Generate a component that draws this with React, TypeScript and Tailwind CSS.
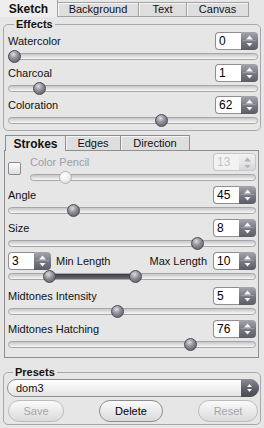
import React from 'react';

// thumb styles for the round slider handles
const thumbDark =
  'border border-[#4a4a52] bg-[radial-gradient(circle_at_40%_30%,#dcdce2_0%,#8c8c94_45%,#55555e_100%)]';
const thumbLight =
  'border border-[#b4b4b8] bg-[radial-gradient(circle_at_40%_30%,#ffffff_0%,#f0f0f0_50%,#d2d2d4_100%)]';

function Arrows({ disabled, small }: { disabled?: boolean; small?: boolean }) {
  const fill = disabled ? '#b4b4b8' : '#f4f4f6';
  if (small) {
    return (
      <svg width="17" height="18" viewBox="0 0 17 18">
        <path d="M6 8 L8.5 5 L11 8 Z" fill={fill} />
        <path d="M6 10 L8.5 13 L11 10 Z" fill={fill} />
      </svg>
    );
  }
  return (
    <svg width="17" height="18" viewBox="0 0 17 18">
      <path d="M5 7.5 L8.5 3.5 L12 7.5 Z" fill={fill} />
      <path d="M2 8.5 H15" stroke={disabled ? '#e8e8ea' : '#9a9aa2'} strokeWidth="1" />
      <path d="M5.5 11 L8.5 14.5 L11.5 11 Z" fill={fill} />
    </svg>
  );
}

function Spin({ value, disabled }: { value: string; disabled?: boolean }) {
  return (
    <div className="flex h-[18px] w-[43px] shrink-0">
      <div
        className={`flex flex-1 items-center rounded-l-[4px] border border-r-0 pl-[3px] text-[12px] ${
          disabled ? 'border-[#c6c6c8] bg-[#f2f2f2] text-[#c4c4c8]' : 'border-[#8e8e92] bg-white text-black'
        }`}
      >
        {value}
      </div>
      <div
        className={`w-[17px] rounded-r-[4px] ${
          disabled
            ? 'border border-l-0 border-[#c6c6c8] bg-gradient-to-b from-[#f2f2f2] to-[#d8d8da]'
            : 'bg-gradient-to-b from-[#a6a6ae] via-[#7a7a84] to-[#5c5c66]'
        }`}
      >
        <Arrows disabled={disabled} />
      </div>
    </div>
  );
}

function Slider({ pos, to, disabled }: { pos: number; to?: number; disabled?: boolean }) {
  const left = (p: number) => `calc(${p * 100}% - ${p * 13}px)`;
  return (
    <div className="relative h-[13px]">
      <div className="absolute inset-x-0 top-[3px] h-[7px] rounded-full border border-[#a6a6a8] bg-gradient-to-b from-[#c6c6c8] to-[#f8f8f8]" />
      {to !== undefined && (
        <div
          className="absolute top-[4px] h-[5px] bg-gradient-to-b from-[#3e3e46] to-[#6c6c74]"
          style={{
            left: `calc(${pos * 100}% - ${pos * 13}px + 6px)`,
            right: `calc(${(1 - to) * 100}% - ${(1 - to) * 13}px + 6px)`,
          }}
        />
      )}
      <div
        className={`absolute top-0 size-[13px] rounded-full ${disabled ? thumbLight : thumbDark}`}
        style={{ left: left(pos) }}
      />
      {to !== undefined && (
        <div className={`absolute top-0 size-[13px] rounded-full ${thumbDark}`} style={{ left: left(to) }} />
      )}
    </div>
  );
}

function Item({
  label,
  value,
  pos,
  gap = 'h-[15px]',
}: {
  label: string;
  value: string;
  pos: number;
  gap?: string;
}) {
  return (
    <div>
      <div className="flex h-[18px] items-center justify-between">
        <span>{label}</span>
        <Spin value={value} />
      </div>
      <div className={gap}>
        <Slider pos={pos} />
      </div>
    </div>
  );
}

function Button({ label, disabled, w }: { label: string; disabled?: boolean; w: string }) {
  return (
    <button
      className={`${w} h-[22px] rounded-full border bg-gradient-to-b from-[#fbfbfb] to-[#dadadc] text-[11px] ${
        disabled ? 'border-[#bdbdc0] text-[#a6a6aa]' : 'border-[#8e8e92] text-black'
      }`}
    >
      {label}
    </button>
  );
}

export default function App() {
  return (
    <div className="h-[428px] w-[264px] overflow-hidden bg-[#e6e6e6] font-['Liberation_Sans',Arial,sans-serif] text-[11px] text-[#111]">
      {/* top tabs */}
      <div className="flex h-[17px] items-end">
        <div className="flex h-[17px] w-[58px] items-center justify-center border-r border-[#a2a2a4] bg-[#eeeeee] text-[12px] font-bold">
          Sketch
        </div>
        <div className="flex h-[15px] w-[81px] items-center justify-center border-r border-t border-b border-[#a2a2a4] bg-[#dedede] shadow-[inset_1px_1px_0_#f6f6f6]">
          Background
        </div>
        <div className="flex h-[15px] w-[48px] items-center justify-center border-r border-t border-b border-[#a2a2a4] bg-[#dedede] shadow-[inset_1px_1px_0_#f6f6f6]">
          Text
        </div>
        <div className="flex h-[15px] w-[62px] items-center justify-center border-r border-t border-b border-[#a2a2a4] bg-[#dedede] shadow-[inset_1px_1px_0_#f6f6f6]">
          Canvas
        </div>
      </div>

      {/* effects group */}
      <fieldset className="ml-[3px] mr-[3px] mt-[1px] rounded-[5px] border border-[#a8a8ac] pb-[2px] pl-[4px] pr-[2px]">
        <legend className="ml-[6px] px-[2px] text-[11px] font-bold leading-[13px]">Effects</legend>
        <div className="pt-[1px]">
          <Item label="Watercolor" value="0" pos={0} gap="h-[14px]" />
          <Item label="Charcoal" value="1" pos={0.104} gap="h-[14px]" />
          <Item label="Coloration" value="62" pos={0.62} gap="h-[14px]" />
        </div>
      </fieldset>

      {/* strokes / edges / direction tabs */}
      <div className="ml-[4px] mr-[5px] mt-[3px]">
        <div className="flex h-[16px] items-end pl-[1px]">
          <div className="relative top-px z-10 flex h-[16px] w-[61px] items-center justify-center border-l border-r border-t border-[#8e8e92] bg-[#e6e6e6] text-[12px] font-bold">
            Strokes
          </div>
          <div className="flex h-[15px] w-[55px] items-center justify-center border-r border-t border-[#8e8e92] bg-[#dedede] shadow-[inset_1px_1px_0_#f6f6f6]">
            Edges
          </div>
          <div className="flex h-[15px] w-[69px] items-center justify-center border-r border-t border-[#8e8e92] bg-[#dedede] shadow-[inset_1px_1px_0_#f6f6f6]">
            Direction
          </div>
        </div>
        <div className="border border-[#8e8e92] pb-[4px] pl-[3px] pr-[2px] pt-[2px]">
          <div className="flex">
            <div className="flex w-[22px] shrink-0 items-center pb-[2px]">
              <div className="size-[13px] rounded-[2px] border border-[#8a8a8e] bg-gradient-to-b from-white to-[#dcdcde]" />
            </div>
            <div className="flex-1">
              <div className="flex h-[18px] items-center justify-between">
                <span className="text-[#9c9ca8]">Color Pencil</span>
                <Spin value="13" disabled />
              </div>
              <div className="h-[15px]">
                <Slider pos={0.134} disabled />
              </div>
            </div>
          </div>
          <Item label="Angle" value="45" pos={0.249} />
          <Item label="Size" value="8" pos={0.78} />
          <div>
            <div className="flex h-[18px] items-center">
              <Spin value="3" />
              <span className="ml-[5px] flex-1">Min Length</span>
              <span className="mr-[6px]">Max Length</span>
              <Spin value="10" />
            </div>
            <div className="h-[17px]">
              <Slider pos={0.147} to={0.513} />
            </div>
          </div>
          <Item label="Midtones Intensity" value="5" pos={0.44} />
          <Item label="Midtones Hatching" value="76" pos={0.75} />
        </div>
      </div>

      {/* presets */}
      <fieldset className="ml-[3px] mr-[3px] mt-[8px] rounded-[5px] border border-[#a8a8ac] pb-[2px] pl-[3px] pr-[1px]">
        <legend className="ml-[6px] px-[2px] text-[11px] font-bold leading-[13px]">Presets</legend>
        <div className="flex h-[18px] rounded-full border border-[#8e8e92] bg-gradient-to-b from-white to-[#e4e4e6]">
          <span className="flex flex-1 items-center pl-[8px] text-[11px]">dom3</span>
          <div className="-my-px -mr-px w-[18px] rounded-r-full bg-gradient-to-b from-[#8e8e98] via-[#62626c] to-[#4a4a54]">
            <Arrows small />
          </div>
        </div>
        <div className="mt-[3px] flex justify-between pl-[1px] pr-[1px]">
          <Button label="Save" disabled w="w-[56px]" />
          <Button label="Delete" w="w-[64px]" />
          <Button label="Reset" disabled w="w-[60px]" />
        </div>
      </fieldset>
    </div>
  );
}
